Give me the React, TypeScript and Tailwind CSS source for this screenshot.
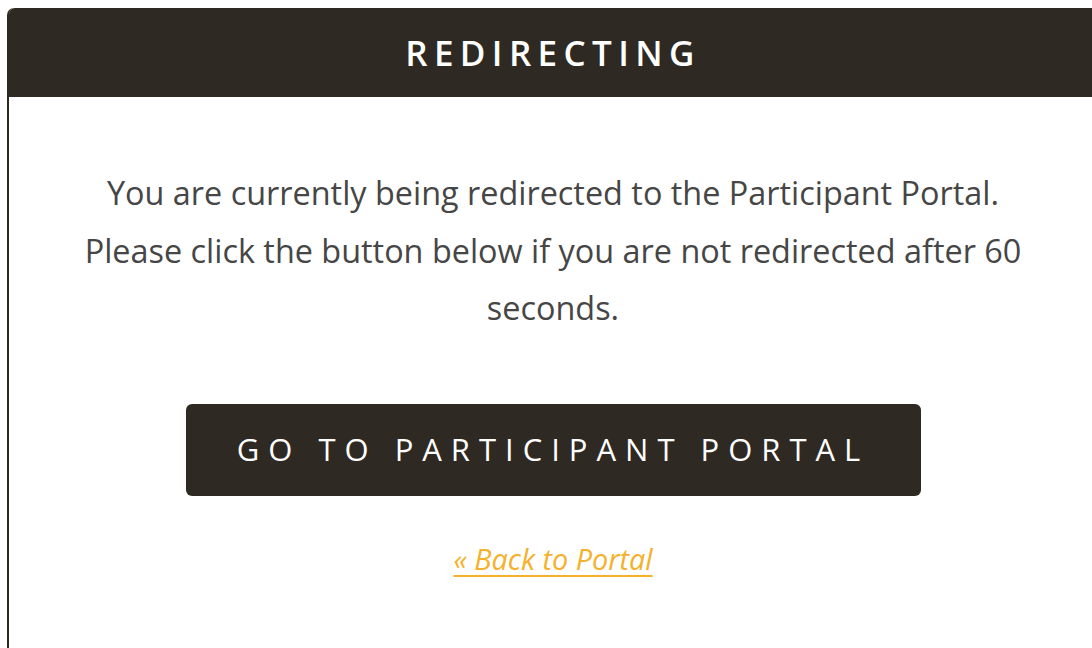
export default function App() {
  return (
    <div
      className="w-[1092px] h-[648px] overflow-hidden bg-white"
      style={{ fontFamily: '"Open Sans", "Liberation Sans", sans-serif' }}
    >
      <div className="ml-[7px] mt-[8px] w-[1090px] h-[700px] rounded-t-[7px] border-l-2 border-[#2f2923] bg-white">
        <div className="h-[89px] rounded-tl-[6px] bg-[#2f2923] flex items-center justify-center">
          <h1 className="text-[35px] font-semibold tracking-[0.182em] text-white leading-none">
            REDIRECTING
          </h1>
        </div>
        <div className="flex flex-col items-center pt-[67px] text-center">
          <p className="w-[960px] text-[32.4px] leading-[57.5px] text-[#464646]">
            You are currently being redirected to the Participant Portal. Please click the button below if you are not redirected after 60 seconds.
          </p>
          <button className="mt-[67px] w-[735px] h-[92px] rounded-[6px] bg-[#2f2923] text-white text-[31px] tracking-[0.29em] leading-none">
            GO TO PARTICIPANT PORTAL
          </button>
          <a
            href="#"
            className="mt-[41px] italic text-[28.8px] text-[#f5b12b] underline underline-offset-[5px] decoration-2"
          >
            « Back to Portal
          </a>
        </div>
      </div>
    </div>
  );
}
